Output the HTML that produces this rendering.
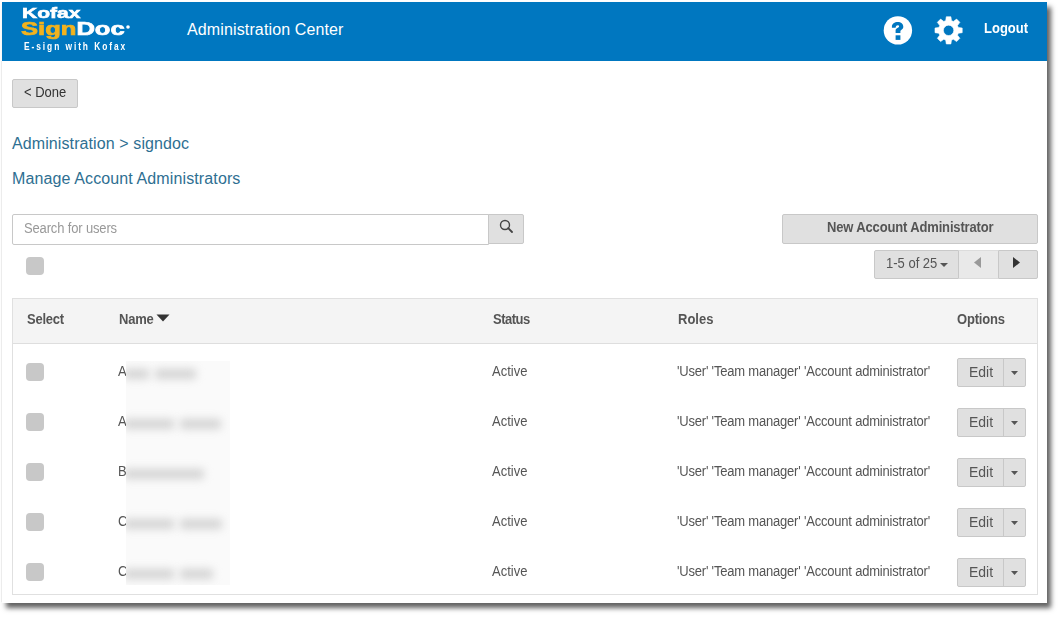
<!DOCTYPE html>
<html><head><meta charset="utf-8">
<style>
*{box-sizing:border-box;margin:0;padding:0}
html,body{width:1061px;height:617px;overflow:hidden;background:#fff;font-family:"Liberation Sans",sans-serif;color:#555}
.frame{position:absolute;left:2px;top:2px;width:1045px;height:601px;background:#fff;box-shadow:4px 5px 5px rgba(0,0,0,0.62)}
.fl{position:absolute;left:1px;top:61px;width:1px;height:541px;background:#ececec}
.hdr{position:absolute;left:2px;top:2px;width:1045px;height:59px;background:#0077c0}
.abs{position:absolute;white-space:nowrap}
.btn{position:absolute;background:#e0e0e0;border:1px solid #c8c8c8;border-radius:2px}
.cb{position:absolute;width:18px;height:18px;border-radius:4px;background:#c8c8c8}
.t13{font-size:13px;line-height:15px;transform:scaleY(1.08);transform-origin:0 0}
.hd{font-size:13px;line-height:15px;font-weight:bold;transform:scaleY(1.08);transform-origin:0 0}
.bl{position:absolute;height:10px;background:#d3d3d3;filter:blur(4px);border-radius:3px}
</style></head><body>
<div class="frame"></div>
<div class="fl"></div>
<div class="hdr"></div>

<div class="abs" style="left:22px;top:4px;font-size:15px;font-weight:bold;color:#fff;line-height:17px;transform:scaleX(1.40);transform-origin:0 0;-webkit-text-stroke:0.6px #fff">Kofax</div>
<div class="abs" style="left:21px;top:19px;font-size:18px;font-weight:bold;color:#fff;line-height:20px;transform:scaleX(1.42);transform-origin:0 0;-webkit-text-stroke:0.7px"><span style="color:#f2b31e;-webkit-text-stroke:0.7px #f2b31e">Sign</span><span style="-webkit-text-stroke:0.7px #fff">Doc</span></div>
<svg class="abs" style="left:125px;top:24px" width="6" height="6" viewBox="0 0 6 6"><circle cx="3" cy="3" r="1.8" fill="#fff"/></svg>
<div class="abs" style="left:24px;top:40px;font-size:10.5px;font-weight:bold;color:#fff;line-height:12px;letter-spacing:2.4px;transform:scaleX(0.8);transform-origin:0 0">E-sign with Kofax</div>

<div class="abs" style="left:187px;top:21px;font-size:16px;color:#fff;line-height:18px;letter-spacing:0.13px">Administration Center</div>

<svg class="abs" style="left:882px;top:14px" width="32" height="32" viewBox="0 0 32 32">
<circle cx="15.9" cy="16.4" r="14.2" fill="#fff"/>
<path fill="#0077c0" d="M9.9 13.8L9.9 12.5C9.9 9.8 12.5 8 15.8 8C19 8 21.3 10 21.3 12.8C21.3 15.5 18.4 16.3 18.4 17L18.4 18.9L13.6 18.9L13.6 16.3C13.6 14.3 17.1 13.8 17.1 12.6C17.1 11.8 16.5 11.3 15.7 11.3C14.7 11.3 14 12 13.6 13.8Z"/>
<rect x="13.6" y="21.3" width="4.8" height="4.6" fill="#0077c0"/>
</svg>
<svg class="abs" style="left:932px;top:14px" width="34" height="34" viewBox="-16.6 -16.35 34 34">
<path fill="#fff" stroke="#fff" stroke-width="0.6" stroke-linejoin="round" fill-rule="evenodd" d="M-2.90 -9.67L-2.30 -13.61L2.30 -13.61L2.90 -9.67A10.1 10.1 0 0 1 4.79 -8.89L8.00 -11.25L11.25 -8.00L8.89 -4.79A10.1 10.1 0 0 1 9.67 -2.90L13.61 -2.30L13.61 2.30L9.67 2.90A10.1 10.1 0 0 1 8.89 4.79L11.25 8.00L8.00 11.25L4.79 8.89A10.1 10.1 0 0 1 2.90 9.67L2.30 13.61L-2.30 13.61L-2.90 9.67A10.1 10.1 0 0 1 -4.79 8.89L-8.00 11.25L-11.25 8.00L-8.89 4.79A10.1 10.1 0 0 1 -9.67 2.90L-13.61 2.30L-13.61 -2.30L-9.67 -2.90A10.1 10.1 0 0 1 -8.89 -4.79L-11.25 -8.00L-8.00 -11.25L-4.79 -8.89A10.1 10.1 0 0 1 -2.90 -9.67ZM5.2 0A5.2 5.2 0 1 0 -5.2 0A5.2 5.2 0 1 0 5.2 0Z"/>
</svg>
<div class="abs" style="left:984px;top:20px;font-size:13px;font-weight:bold;color:#fff;line-height:15px;transform:scaleY(1.08);transform-origin:0 0">Logout</div>

<div class="btn" style="left:12px;top:79px;width:66px;height:29px"></div>
<div class="abs t13" style="left:24px;top:84px;color:#333">&lt; Done</div>

<div class="abs" style="left:12px;top:135px;font-size:16px;line-height:18px;color:#2e6f92;letter-spacing:0.1px">Administration &gt; signdoc</div>
<div class="abs" style="left:12px;top:170px;font-size:16px;line-height:18px;color:#2e6f92;letter-spacing:0.12px">Manage Account Administrators</div>

<div class="abs" style="left:12px;top:214px;width:477px;height:31px;border:1px solid #c8c8c8;border-radius:2px 0 0 2px;background:#fff"></div>
<div class="abs t13" style="left:24px;top:220px;color:#999;letter-spacing:-0.15px">Search for users</div>
<div class="btn" style="left:488px;top:214px;width:36px;height:30px;border-radius:0 2px 2px 0"></div>
<svg class="abs" style="left:499px;top:219px" width="15" height="15" viewBox="0 0 15 15"><circle cx="6" cy="6" r="4.5" fill="none" stroke="#444" stroke-width="1.4"/><path d="M9.2 9.2L13 13" stroke="#444" stroke-width="1.8" stroke-linecap="round"/></svg>

<div class="cb" style="left:26px;top:257px"></div>

<div class="btn" style="left:782px;top:214px;width:256px;height:30px"></div>
<div class="abs hd" style="left:827px;top:219px;letter-spacing:-0.15px">New Account Administrator</div>

<div class="btn" style="left:874px;top:250px;width:85px;height:29px;border-radius:2px 0 0 2px"></div>
<div class="abs" style="left:959px;top:250px;width:39px;height:29px;background:#e9e9e9;border-top:1px solid #dcdcdc;border-bottom:1px solid #dcdcdc"></div>
<div class="btn" style="left:998px;top:250px;width:40px;height:29px;border-radius:0 2px 2px 0"></div>
<div class="abs t13" style="left:886px;top:255px">1-5 of 25</div>
<svg class="abs" style="left:940px;top:263px" width="8" height="4" viewBox="0 0 8 4"><path d="M0 0H8L4 4Z" fill="#555"/></svg>
<svg class="abs" style="left:974px;top:257px" width="7" height="11" viewBox="0 0 7 11"><path d="M7 0V11L0 5.5Z" fill="#999"/></svg>
<svg class="abs" style="left:1013px;top:257px" width="7" height="11" viewBox="0 0 7 11"><path d="M0 0V11L7 5.5Z" fill="#333"/></svg>

<div class="abs" style="left:12px;top:298px;width:1026px;height:297px;border:1px solid #e0e0e0"></div>
<div class="abs" style="left:13px;top:299px;width:1024px;height:45px;background:#f4f4f4;border-bottom:1px solid #dedede"></div>

<div class="abs hd" style="left:27px;top:311px;letter-spacing:-0.25px">Select</div>
<div class="abs hd" style="left:119px;top:311px;letter-spacing:-0.2px">Name</div>
<svg class="abs" style="left:156px;top:314px" width="14" height="8" viewBox="0 0 14 8"><path d="M0.5 0.5H13.5L7 7.5Z" fill="#333"/></svg>
<div class="abs hd" style="left:493px;top:311px;letter-spacing:-0.5px">Status</div>
<div class="abs hd" style="left:678px;top:311px">Roles</div>
<div class="abs hd" style="left:957px;top:311px;letter-spacing:-0.2px">Options</div>

<div class="cb" style="left:26px;top:363px"></div>
<div class="abs t13" style="left:118px;top:363px">A</div>
<div class="abs t13" style="left:492px;top:363px">Active</div>
<div class="abs t13" style="left:677px;top:363px;letter-spacing:-0.2px">'User' 'Team manager' 'Account administrator'</div>
<div class="btn" style="left:957px;top:358px;width:69px;height:29px"></div>
<div class="abs" style="left:1003px;top:359px;width:1px;height:27px;background:#c8c8c8"></div>
<div class="abs" style="left:969px;top:363px;font-size:14px;line-height:16px;transform:scaleY(1.04);transform-origin:0 0">Edit</div>
<svg class="abs" style="left:1011px;top:371px" width="7" height="4" viewBox="0 0 7 4"><path d="M0 0H7L3.5 4Z" fill="#555"/></svg>
<div class="cb" style="left:26px;top:413px"></div>
<div class="abs t13" style="left:118px;top:413px">A</div>
<div class="abs t13" style="left:492px;top:413px">Active</div>
<div class="abs t13" style="left:677px;top:413px;letter-spacing:-0.2px">'User' 'Team manager' 'Account administrator'</div>
<div class="btn" style="left:957px;top:408px;width:69px;height:29px"></div>
<div class="abs" style="left:1003px;top:409px;width:1px;height:27px;background:#c8c8c8"></div>
<div class="abs" style="left:969px;top:413px;font-size:14px;line-height:16px;transform:scaleY(1.04);transform-origin:0 0">Edit</div>
<svg class="abs" style="left:1011px;top:421px" width="7" height="4" viewBox="0 0 7 4"><path d="M0 0H7L3.5 4Z" fill="#555"/></svg>
<div class="cb" style="left:26px;top:463px"></div>
<div class="abs t13" style="left:118px;top:463px">B</div>
<div class="abs t13" style="left:492px;top:463px">Active</div>
<div class="abs t13" style="left:677px;top:463px;letter-spacing:-0.2px">'User' 'Team manager' 'Account administrator'</div>
<div class="btn" style="left:957px;top:458px;width:69px;height:29px"></div>
<div class="abs" style="left:1003px;top:459px;width:1px;height:27px;background:#c8c8c8"></div>
<div class="abs" style="left:969px;top:463px;font-size:14px;line-height:16px;transform:scaleY(1.04);transform-origin:0 0">Edit</div>
<svg class="abs" style="left:1011px;top:471px" width="7" height="4" viewBox="0 0 7 4"><path d="M0 0H7L3.5 4Z" fill="#555"/></svg>
<div class="cb" style="left:26px;top:513px"></div>
<div class="abs t13" style="left:118px;top:513px">C</div>
<div class="abs t13" style="left:492px;top:513px">Active</div>
<div class="abs t13" style="left:677px;top:513px;letter-spacing:-0.2px">'User' 'Team manager' 'Account administrator'</div>
<div class="btn" style="left:957px;top:508px;width:69px;height:29px"></div>
<div class="abs" style="left:1003px;top:509px;width:1px;height:27px;background:#c8c8c8"></div>
<div class="abs" style="left:969px;top:513px;font-size:14px;line-height:16px;transform:scaleY(1.04);transform-origin:0 0">Edit</div>
<svg class="abs" style="left:1011px;top:521px" width="7" height="4" viewBox="0 0 7 4"><path d="M0 0H7L3.5 4Z" fill="#555"/></svg>
<div class="cb" style="left:26px;top:563px"></div>
<div class="abs t13" style="left:118px;top:563px">C</div>
<div class="abs t13" style="left:492px;top:563px">Active</div>
<div class="abs t13" style="left:677px;top:563px;letter-spacing:-0.2px">'User' 'Team manager' 'Account administrator'</div>
<div class="btn" style="left:957px;top:558px;width:69px;height:29px"></div>
<div class="abs" style="left:1003px;top:559px;width:1px;height:27px;background:#c8c8c8"></div>
<div class="abs" style="left:969px;top:563px;font-size:14px;line-height:16px;transform:scaleY(1.04);transform-origin:0 0">Edit</div>
<svg class="abs" style="left:1011px;top:571px" width="7" height="4" viewBox="0 0 7 4"><path d="M0 0H7L3.5 4Z" fill="#555"/></svg>

<div class="abs" style="left:126px;top:361px;width:104px;height:224px;background:#fafafa;overflow:hidden">
<div class="bl" style="left:-2px;top:8px;width:25px"></div>
<div class="bl" style="left:29px;top:8px;width:41px"></div>
<div class="bl" style="left:-2px;top:58px;width:50px"></div>
<div class="bl" style="left:54px;top:58px;width:41px"></div>
<div class="bl" style="left:-2px;top:108px;width:80px"></div>
<div class="bl" style="left:-2px;top:158px;width:50px"></div>
<div class="bl" style="left:54px;top:158px;width:42px"></div>
<div class="bl" style="left:-2px;top:208px;width:50px"></div>
<div class="bl" style="left:54px;top:208px;width:33px"></div>
</div>
</body></html>
